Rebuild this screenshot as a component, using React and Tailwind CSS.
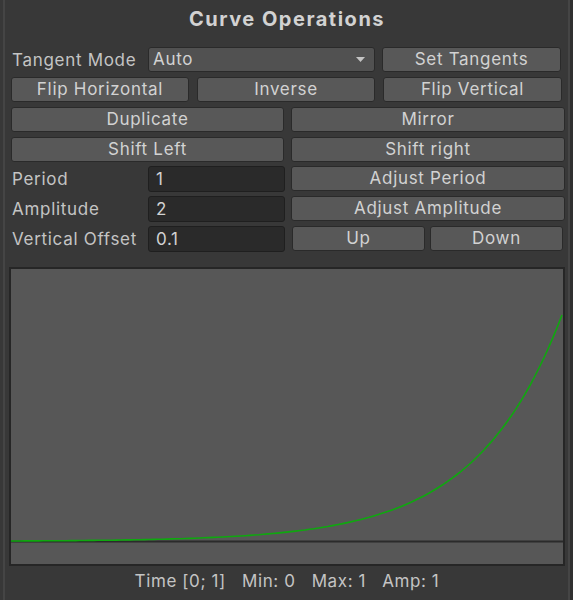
import React from "react";

const font = { fontFamily: "Inter, 'Noto Sans', sans-serif" };

function Btn({ children, className = "" }) {
  return (
    <button
      className={
        "h-[25px] shrink-0 rounded-[3px] border border-[#2a2a2a] bg-[#585858] text-[17px] leading-[23px] tracking-[0.7px] text-[#d2d2d2] " +
        className
      }
    >
      {children}
    </button>
  );
}

function Field({ value }) {
  return (
    <div className="h-[26px] w-[137px] shrink-0 rounded-[3px] border border-[#1f1f1f] bg-[#2a2a2a] pl-[7px] text-[17px] leading-[24px] tracking-[0.7px] text-[#d2d2d2]">
      {value}
    </div>
  );
}

function Label({ children }) {
  return (
    <div className="w-[137px] shrink-0 pl-[1px] text-[17px] leading-[24px] tracking-[0.7px] text-[#c4c4c4]">
      {children}
    </div>
  );
}

function Curve() {
  const w = 551;
  const base = 272;
  const top = 46;
  const k = 6.4;
  const pts = [];
  for (let i = 0; i <= 120; i++) {
    const t = i / 120;
    const f = (Math.exp(k * t) - 1) / (Math.exp(k) - 1);
    pts.push(`${(t * w).toFixed(1)},${(base - f * (base - top)).toFixed(1)}`);
  }
  return (
    <svg width="552" height="295" className="block">
      <line x1="0" y1={base + 0.5} x2="552" y2={base + 0.5} stroke="#2b2b2b" strokeWidth="2" />
      <polyline points={pts.join(" ")} fill="none" stroke="#0fa80f" strokeWidth="1.6" />
    </svg>
  );
}

export default function App() {
  return (
    <div className="flex h-[600px] w-[573px] overflow-hidden bg-[#383838]" style={font}>
      <div className="w-[3px] shrink-0" />
      <div className="w-[2px] shrink-0 bg-[#454545]" />

      <div className="flex w-[563px] shrink-0 flex-col pl-[4px] pr-[3px]">
        <div className="pt-[5px] text-center text-[20px] font-bold leading-[28px] tracking-[1.5px] text-[#d2d2d2]">
          Curve Operations
        </div>

        <div className="mt-[14px] flex flex-col gap-[5px] pl-[2px]">
          <div className="flex h-[25px] items-center">
            <Label>Tangent Mode</Label>
            <div className="flex h-[25px] w-[227px] shrink-0 items-center justify-between rounded-[3px] border border-[#2a2a2a] bg-[#515151] pl-[4px] pr-[9px] text-[17px] leading-[23px] tracking-[0.7px] text-[#d2d2d2]">
              <span>Auto</span>
              <svg width="9" height="5" viewBox="0 0 9 5">
                <polygon points="0,0 9,0 4.5,5" fill="#c4c4c4" />
              </svg>
            </div>
            <Btn className="ml-[7px] w-[179px]">Set Tangents</Btn>
          </div>

          <div className="flex h-[25px] items-center gap-[8px]">
            <Btn className="w-[178px]">Flip Horizontal</Btn>
            <Btn className="w-[178px]">Inverse</Btn>
            <Btn className="w-[179px]">Flip Vertical</Btn>
          </div>

          <div className="flex h-[25px] items-center gap-[7px]">
            <Btn className="w-[273px]">Duplicate</Btn>
            <Btn className="w-[274px]">Mirror</Btn>
          </div>

          <div className="flex h-[25px] items-center gap-[7px]">
            <Btn className="w-[273px]">Shift Left</Btn>
            <Btn className="w-[274px]">Shift right</Btn>
          </div>

          <div className="-mt-[1px] flex h-[25px] items-center">
            <Label>Period</Label>
            <Field value="1" />
            <Btn className="ml-[6px] w-[274px]">Adjust Period</Btn>
          </div>

          <div className="flex h-[25px] items-center">
            <Label>Amplitude</Label>
            <Field value="2" />
            <Btn className="ml-[6px] w-[274px]">Adjust Amplitude</Btn>
          </div>

          <div className="flex h-[25px] items-center">
            <Label>Vertical Offset</Label>
            <Field value="0.1" />
            <Btn className="ml-[7px] w-[133px]">Up</Btn>
            <Btn className="ml-[5px] w-[133px]">Down</Btn>
          </div>
        </div>

        <div className="mt-[16px] w-[556px] border-2 border-[#262626] bg-[#575757]">
          <Curve />
        </div>

        <div className="mt-[3px] whitespace-pre text-center text-[17px] leading-[24px] tracking-[0.6px] text-[#c4c4c4]">
          {"Time [0; 1]   Min: 0   Max: 1   Amp: 1"}
        </div>
      </div>

      <div className="w-[2px] shrink-0 bg-[#454545]" />
      <div className="flex-1 bg-[#303030]" />
    </div>
  );
}
